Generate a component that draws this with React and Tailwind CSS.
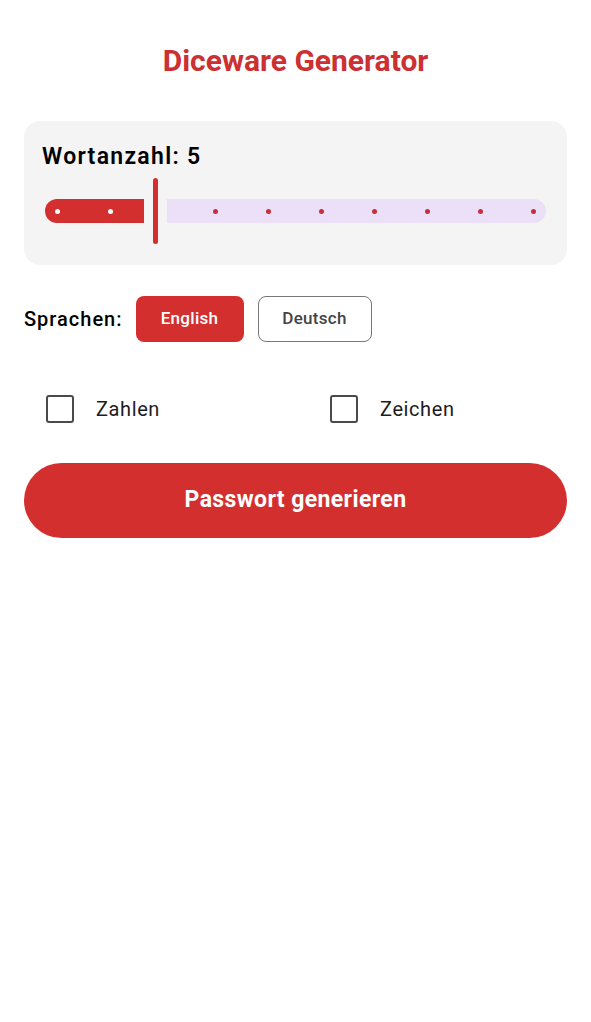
import React, { useState } from 'react';

function Slider() {
  const activeDots = [57, 110];
  const inactiveDots = [215, 268, 321, 374, 427, 480, 533];
  return (
    <div className="relative h-[66px] mt-[6px] mx-[-18px]">
      <div className="absolute left-[21px] top-[21px] w-[99px] h-[24px] rounded-l-full rounded-r-[3px] bg-[#d32f2f]" />
      <div className="absolute left-[143px] top-[21px] w-[379px] h-[24px] rounded-r-full rounded-l-[3px] bg-[#ebe0f7]" />
      {activeDots.map((x) => (
        <div key={x} className="absolute top-[30.5px] w-[5px] h-[5px] rounded-full bg-white" style={{ left: x - 24 - 2.5 }} />
      ))}
      {inactiveDots.map((x) => (
        <div key={x} className="absolute top-[30.5px] w-[5px] h-[5px] rounded-full bg-[#c62f3b]" style={{ left: x - 24 - 2.5 }} />
      ))}
      <div className="absolute left-[129px] top-0 w-[5px] h-[66px] rounded-full bg-[#d32f2f]" />
    </div>
  );
}

function Check({ label }) {
  return (
    <div className="flex items-center gap-[22px]">
      <div className="w-[28px] h-[28px] rounded-[3px] border-[2.5px] border-[#4a4a4a]" />
      <span className="text-[20px] text-[#1c1b1f] tracking-[0.6px]">{label}</span>
    </div>
  );
}

export default function App() {
  const [lang, setLang] = useState('en');
  return (
    <div className="w-[591px] min-h-[1022px] bg-white px-[24px] font-['Roboto',sans-serif]">
      <h1 className="pt-[41px] text-center text-[30px] font-bold text-[#cc3033] leading-[40px]">
        Diceware Generator
      </h1>

      <div className="mt-[40px] h-[144px] rounded-[16px] bg-[#f4f4f4] px-[18px] pt-[21px]">
        <div className="text-[23px] font-semibold text-black leading-[30px] tracking-[1.3px]">Wortanzahl: 5</div>
        <Slider />
      </div>

      <div className="mt-[31px] flex items-center">
        <span className="text-[20px] font-medium text-black mr-[13px] tracking-[1px]">Sprachen:</span>
        <button
          onClick={() => setLang('en')}
          className={`w-[108px] h-[46px] rounded-[8px] text-[17px] font-medium tracking-[0.3px] ${lang === 'en' ? 'bg-[#d32f2f] text-white' : 'border-[1.5px] border-[#777] text-[#444]'}`}
        >
          English
        </button>
        <button
          onClick={() => setLang('de')}
          className={`ml-[14px] w-[114px] h-[46px] rounded-[8px] text-[17px] font-medium tracking-[0.3px] ${lang === 'de' ? 'bg-[#d32f2f] text-white' : 'border-[1.5px] border-[#777] text-[#444]'}`}
        >
          Deutsch
        </button>
      </div>

      <div className="mt-[52px] flex pl-[22px]">
        <div className="w-[284px]">
          <Check label="Zahlen" />
        </div>
        <Check label="Zeichen" />
      </div>

      <button className="mt-[39px] w-full h-[75px] rounded-full bg-[#d32f2f] text-white text-[23px] font-bold tracking-[0.4px]">
        Passwort generieren
      </button>
    </div>
  );
}
